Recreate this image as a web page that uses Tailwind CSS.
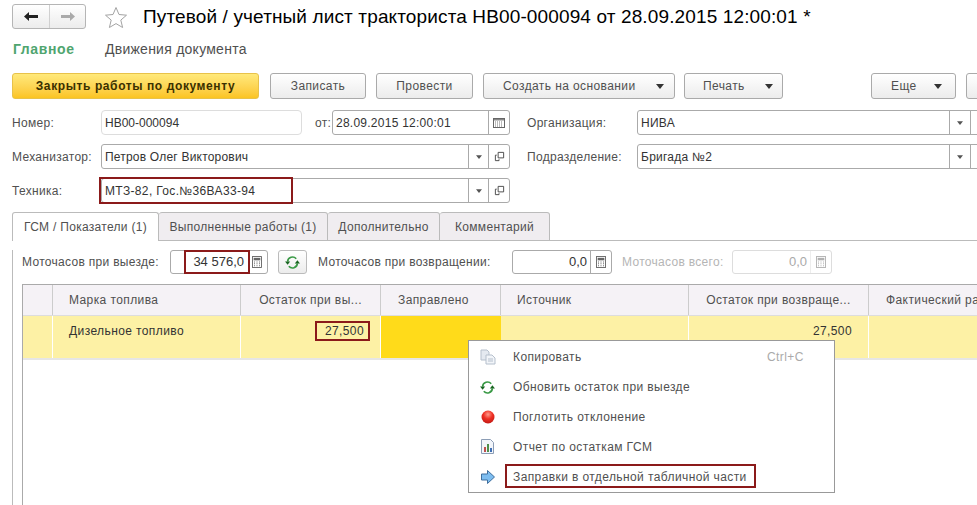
<!DOCTYPE html>
<html lang="ru">
<head>
  <meta charset="UTF-8">
  <title>Путевой лист</title>
  <script src="https://cdn.jsdelivr.net/npm/@tailwindcss/browser@4"></script>
</head>
<body>
  <svg class="hidden">
    <symbol id="cal" viewBox="0 0 12 12">
      <rect x="0.5" y="1.5" width="11" height="9" fill="#fff" stroke="#666"/>
      <path d="M1 2h10v1.500H1z" fill="#888"/>
      <path d="M2 5h1M4 5h1M6 5h1M8 5h1M2 7h1M4 7h1M6 7h1M8 7h1M2 9h1M4 9h1M6 9h1M8 9h1" stroke="#777"/>
    </symbol>
    <symbol id="calc" viewBox="0 0 12 14">
      <rect x="0.500" y="0.500" width="11" height="13" fill="#fff" stroke="#555"/>
      <path d="M2 2h8v3H2z" fill="#666"/>
      <path d="M2.500 7h1M5.500 7h1M8.500 7h1M2.500 9h1M5.500 9h1M8.500 9h1M2.500 11.500h1M5.500 11.500h1M8.500 11.500h1" stroke="#555" stroke-width="1.300"/>
    </symbol>
    <symbol id="open" viewBox="0 0 12 12">
      <path d="M4.500 1.500h6v6h-6z" fill="none" stroke="#444"/>
      <path d="M3 4.500H1.500v6h4V9" fill="none" stroke="#444"/>
    </symbol>
    <symbol id="tri" viewBox="0 0 8 5"><path d="M0 0h8L4 5z" fill="currentColor"/></symbol>
    <symbol id="refresh" viewBox="0 0 16 14">
      <path d="M2.700 6A5.300 5.300 0 0 1 12 3" fill="none" stroke="#3a9a46" stroke-width="1.800"/>
      <path d="M0 6h5.500L2.700 9.500z" fill="#17641f"/>
      <path d="M13.300 8A5.300 5.300 0 0 1 4 11" fill="none" stroke="#3a9a46" stroke-width="1.800"/>
      <path d="M16 8h-5.500l2.800-3.500z" fill="#17641f"/>
    </symbol>
  </svg>

  <div class="relative w-[977px] h-[505px] overflow-hidden bg-white font-['Liberation_Sans',Arial,sans-serif] text-[12px] tracking-[0.3px] text-[#505050]">

    <!-- title -->
    <div class="flex items-center pt-[3px] pl-[12px] h-[30px]">
      <div class="flex w-[74px] h-[25px] border border-[#b5b5b5] rounded-[3px] bg-linear-to-b from-white to-[#ececec]">
        <div class="w-[37px] flex items-center justify-center border-r border-[#d0d0d0]">
          <svg width="14" height="9" viewBox="0 0 14 9"><path d="M0 4.500L5 0v3h9v3H5v3z" fill="#222"/></svg>
        </div>
        <div class="flex-1 flex items-center justify-center">
          <svg width="14" height="9" viewBox="0 0 14 9"><path d="M14 4.500L9 0v3H0v3h9v3z" fill="#aaa"/></svg>
        </div>
      </div>
      <svg class="ml-[18px]" width="24" height="22" viewBox="0 0 24 22"><path d="M12 1.500l3 7 7.500.7-5.700 4.900 1.800 7.400L12 17.600l-6.600 3.900 1.800-7.400L1.500 9.200 9 8.500z" fill="#fff" stroke="#a3a3a3"/></svg>
      <h1 class="ml-[15px] mt-[2px] text-[19px] tracking-[0.13px] text-black whitespace-nowrap">Путевой / учетный лист тракториста НВ00-000094 от 28.09.2015 12:00:01 *</h1>
    </div>

    <!-- sections -->
    <div class="flex items-center h-[20px] mt-[9px] pl-[13px] text-[14px] tracking-[0.25px]">
      <span class="w-[92px] font-bold tracking-[0.6px] text-[#4fa56f]">Главное</span>
      <span>Движения документа</span>
    </div>

    <!-- command bar -->
    <div class="flex w-[1100px] mt-[14px] pl-[12px] h-[26px] tracking-[0.4px] whitespace-nowrap">
      <button class="w-[247px] rounded-[3px] font-bold tracking-[0.6px] text-[#3a3000] bg-linear-to-b from-[#ffe97a] to-[#fbc41f] border border-[#e8c24a]">Закрыть работы по документу</button>
      <button class="ml-[11px] w-[96px] rounded-[3px] border border-[#aaa] bg-linear-to-b from-white to-[#ececec]">Записать</button>
      <button class="ml-[10px] w-[97px] rounded-[3px] border border-[#aaa] bg-linear-to-b from-white to-[#ececec]">Провести</button>
      <button class="ml-[10px] w-[192px] pl-[19px] rounded-[3px] border border-[#aaa] bg-linear-to-b from-white to-[#ececec] flex items-center gap-[20px]">Создать на основании <svg class="text-[#333]" width="8" height="5"><use href="#tri"/></svg></button>
      <button class="ml-[9px] w-[99px] pl-[18px] rounded-[3px] border border-[#aaa] bg-linear-to-b from-white to-[#ececec] flex items-center gap-[20px]">Печать <svg class="text-[#333]" width="8" height="5"><use href="#tri"/></svg></button>
      <button class="ml-[88px] w-[85px] pl-[19px] rounded-[3px] border border-[#aaa] bg-linear-to-b from-white to-[#ececec] flex items-center gap-[17px]">Еще <svg class="text-[#333]" width="8" height="5"><use href="#tri"/></svg></button>
      <button class="ml-[10px] w-[40px] rounded-[3px] border border-[#aaa] bg-linear-to-b from-white to-[#ececec]"></button>
    </div>

    <!-- fields -->
    <div class="flex flex-col gap-[9px] w-[1100px] mt-[11px] pl-[12px] whitespace-nowrap">
      <div class="flex items-center h-[25px]">
        <span class="w-[89px]">Номер:</span>
        <div class="w-[201px] h-full flex items-center pl-[3px] border border-[#ddd] rounded-[4px] tracking-normal text-[#333]">НВ00-000094</div>
        <span class="ml-[13px] w-[17px]">от:</span>
        <div class="w-[178px] h-full flex items-center border border-[#aaa] rounded-[3px] tracking-[0.25px] text-[#333]">
          <span class="flex-1 pl-[3px]">28.09.2015 12:00:01</span>
          <span class="w-[21px] h-full flex items-center justify-center border-l border-[#aaa]"><svg width="12" height="12"><use href="#cal"/></svg></span>
        </div>
        <span class="ml-[17px] w-[110px]">Организация:</span>
        <div class="w-[400px] h-full flex items-center border border-[#aaa] rounded-[3px] tracking-[0.25px] text-[#333]">
          <span class="w-[311px] pl-[3px]">НИВА</span>
          <span class="w-[21px] h-full flex items-center justify-center border-l border-[#aaa] text-[#555]"><svg width="6" height="4"><use href="#tri"/></svg></span>
          <span class="w-[21px] h-full border-l border-[#aaa]"></span>
        </div>
      </div>
      <div class="flex items-center h-[25px]">
        <span class="w-[89px]">Механизатор:</span>
        <div class="w-[409px] h-full flex items-center border border-[#aaa] rounded-[3px] tracking-[0.2px] text-[#333]">
          <span class="flex-1 pl-[3px]">Петров Олег Викторович</span>
          <span class="w-[20px] h-full flex items-center justify-center border-l border-[#aaa] text-[#555]"><svg width="6" height="4"><use href="#tri"/></svg></span>
          <span class="w-[21px] h-full flex items-center justify-center border-l border-[#aaa]"><svg width="11" height="11"><use href="#open"/></svg></span>
        </div>
        <span class="ml-[17px] w-[110px]">Подразделение:</span>
        <div class="w-[400px] h-full flex items-center border border-[#aaa] rounded-[3px] tracking-[0.25px] text-[#333]">
          <span class="w-[311px] pl-[3px]">Бригада №2</span>
          <span class="w-[21px] h-full flex items-center justify-center border-l border-[#aaa] text-[#555]"><svg width="6" height="4"><use href="#tri"/></svg></span>
          <span class="w-[21px] h-full border-l border-[#aaa]"></span>
        </div>
      </div>
      <div class="flex items-center h-[25px]">
        <span class="w-[89px]">Техника:</span>
        <div class="relative w-[409px] h-full flex items-center border border-[#aaa] rounded-[3px] tracking-[0.35px] text-[#333]">
          <span class="flex-1 pl-[3px]">МТЗ-82, Гос.№36ВА33-94</span>
          <span class="w-[20px] h-full flex items-center justify-center border-l border-[#aaa] text-[#555]"><svg width="6" height="4"><use href="#tri"/></svg></span>
          <span class="w-[21px] h-full flex items-center justify-center border-l border-[#aaa]"><svg width="11" height="11"><use href="#open"/></svg></span>
          <div class="absolute left-[-3px] top-[-2px] w-[194px] h-[27px] border-2 border-[#8b1a1a]"></div>
        </div>
      </div>
    </div>

    <!-- page tabs -->
    <div class="flex mt-[9px] pl-[12px] h-[29px] whitespace-nowrap">
      <div class="w-[147px] border border-b-0 border-[#bbb] rounded-t-[3px] flex items-center justify-center">ГСМ / Показатели (1)</div>
      <div class="w-[169px] border-t border-r border-b border-[#bbb] bg-[#f0edf0] rounded-t-[3px] flex items-center justify-center">Выполненные работы (1)</div>
      <div class="w-[112px] border-t border-r border-b border-[#bbb] bg-[#f0edf0] rounded-t-[3px] flex items-center justify-center">Дополнительно</div>
      <div class="w-[110px] border-t border-r border-b border-[#bbb] bg-[#f0edf0] rounded-t-[3px] flex items-center justify-center">Комментарий</div>
      <div class="flex-1 border-b border-[#bbb]"></div>
    </div>

    <div class="ml-[12px] border-l border-[#bbb] pl-[9px] h-[270px]">
      <!-- motor hours -->
      <div class="flex items-center h-[24px] mt-[9px] pt-0 whitespace-nowrap">
        <span class="w-[148px]">Моточасов при выезде:</span>
        <div class="relative w-[98px] h-full flex items-center border border-[#aaa] rounded-[3px] tracking-normal text-[#333]">
          <span class="flex-1 text-right pr-[3px] text-[13px]">34 576,0</span>
          <span class="w-[20px] h-full flex items-center justify-center"><svg width="10" height="12"><use href="#calc"/></svg></span>
          <div class="absolute left-[13px] top-[-1px] w-[66px] h-[24px] border-2 border-[#8b1a1a]"></div>
        </div>
        <button class="ml-[10px] w-[29px] h-full flex items-center justify-center rounded-[3px] border border-[#bbb] bg-linear-to-b from-white to-[#ececec]"><svg width="15" height="13"><use href="#refresh"/></svg></button>
        <span class="ml-[11px] w-[194px]">Моточасов при возвращении:</span>
        <div class="w-[100px] h-full flex items-center border border-[#aaa] rounded-[3px] tracking-normal text-[#333]">
          <span class="flex-1 text-right pr-[3px] text-[13px]">0,0</span>
          <span class="w-[21px] h-full flex items-center justify-center border-l border-[#aaa]"><svg width="10" height="12"><use href="#calc"/></svg></span>
        </div>
        <span class="ml-[10px] w-[110px] text-[#b5b5b5]">Моточасов всего:</span>
        <div class="w-[100px] h-full flex items-center border border-[#ddd] rounded-[3px] tracking-normal text-[#aaa]">
          <span class="flex-1 text-right pr-[3px] text-[13px]">0,0</span>
          <span class="w-[21px] h-full flex items-center justify-center border-l border-[#ddd] opacity-50"><svg width="10" height="12"><use href="#calc"/></svg></span>
        </div>
      </div>

      <!-- table -->
      <div class="mt-[10px] w-[1000px] h-[300px] border-l border-t border-[#aaa] tracking-[0.4px] whitespace-nowrap">
        <div class="grid grid-cols-[30px_188px_140px_120px_188px_180px_155px] h-[31px] bg-[#f5f2f6] border-b border-[#ddd]">
          <div class="border-r border-[#ccc]"></div>
          <div class="border-r border-[#ccc] flex items-center pl-[16px]">Марка топлива</div>
          <div class="border-r border-[#ccc] flex items-center justify-center">Остаток при вы...</div>
          <div class="border-r border-[#ccc] flex items-center pl-[17px]">Заправлено</div>
          <div class="border-r border-[#ccc] flex items-center pl-[16px]">Источник</div>
          <div class="border-r border-[#ccc] flex items-center justify-center">Остаток при возвраще...</div>
          <div class="flex items-center pl-[17px]">Фактический расход</div>
        </div>
        <div class="grid grid-cols-[30px_188px_140px_120px_188px_180px_155px] h-[44px] bg-[#fdf1a5] border-b-2 border-[#e6e6e6] text-[#333]">
          <div class="border-r border-white"></div>
          <div class="border-r border-white pl-[16px] pt-[6px]">Дизельное топливо</div>
          <div class="relative border-r border-white text-right pr-[16px] pt-[6px]">27,500
            <div class="absolute left-[74px] top-[5px] w-[55px] h-[20px] border-2 border-[#8b1a1a]"></div>
          </div>
          <div class="bg-[#ffdb1a]"></div>
          <div class="border-r border-white"></div>
          <div class="border-r border-white text-right pr-[16px] pt-[6px]">27,500</div>
          <div></div>
        </div>
      </div>
    </div>

    <!-- context menu -->
    <div class="absolute left-[468px] top-[340px] w-[367px] h-[153px] bg-white border border-[#999] py-[1px] tracking-[0.4px] whitespace-nowrap">
      <div class="flex items-center h-[30px]">
        <svg class="ml-[11px]" width="16" height="16" viewBox="0 0 16 16"><path d="M1 1h6l2 2v8H1z" fill="#e4e9f0" stroke="#b5bfcc"/><path d="M6 6h6l3 3v6H6z" fill="#f2f5f9" stroke="#b5bfcc"/><path d="M8 10h5M8 12h5" stroke="#b5bfcc"/></svg>
        <span class="ml-[17px] w-[254px]">Копировать</span><span class="text-[#aaa]">Ctrl+C</span>
      </div>
      <div class="flex items-center h-[30px]">
        <svg class="ml-[11px]" width="15" height="13"><use href="#refresh"/></svg>
        <span class="ml-[18px]">Обновить остаток при выезде</span>
      </div>
      <div class="flex items-center h-[30px]">
        <svg class="ml-[12px]" width="14" height="14" viewBox="0 0 14 14"><defs><radialGradient id="ball" cx="0.5" cy="0.3" r="0.7"><stop offset="0" stop-color="#ff9a8a"/><stop offset="0.5" stop-color="#ee2f24"/><stop offset="1" stop-color="#c21a14"/></radialGradient></defs><circle cx="7" cy="7" r="6.500" fill="url(#ball)"/></svg>
        <span class="ml-[18px]">Поглотить отклонение</span>
      </div>
      <div class="flex items-center h-[30px]">
        <svg class="ml-[12px]" width="14" height="16" viewBox="0 0 14 16"><path d="M.5.500h9l3 3v11H.5z" fill="#f2f5fa" stroke="#8c9db5"/><path d="M3 13V8h2v5z" fill="#c0504d"/><path d="M6 13V5h2v8z" fill="#4f8f4a"/><path d="M9 13V9h2v4z" fill="#3f6fb5"/></svg>
        <span class="ml-[18px]">Отчет по остаткам ГСМ</span>
      </div>
      <div class="flex items-center h-[30px]">
        <svg class="ml-[12px]" width="14" height="14" viewBox="0 0 14 14"><path d="M.5 4h6V.500L13.500 7l-7 6.500V10h-6z" fill="#7dbdf0" stroke="#3f6f9e"/></svg>
        <span class="ml-[18px]">Заправки в отдельной табличной части</span>
      </div>
      <div class="absolute left-[36px] top-[123px] w-[251px] h-[24px] border-2 border-[#8b1a1a]"></div>
    </div>
  </div>
</body>
</html>
